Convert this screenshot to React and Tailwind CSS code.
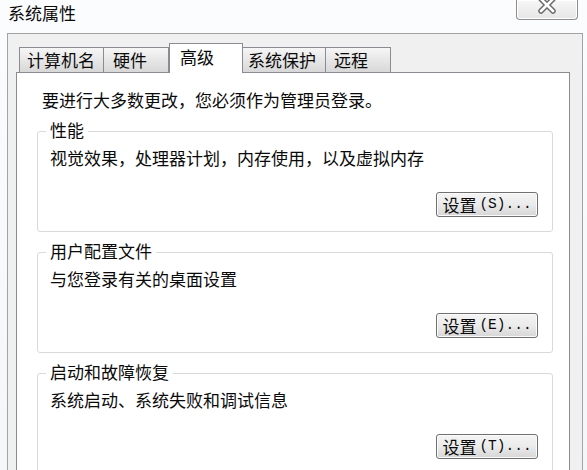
export default function App() {
  const groups = [
    { t: "性能", d: "视觉效果，处理器计划，内存使用，以及虚拟内存", k: "S" },
    { t: "用户配置文件", d: "与您登录有关的桌面设置", k: "E" },
    { t: "启动和故障恢复", d: "系统启动、系统失败和调试信息", k: "T" },
  ];
  return (
    <div className="w-[587px] h-[470px] overflow-hidden bg-linear-to-b from-[#fbfcfd] to-[#f4f6f8] text-[#0a0a0a] font-['Noto_Sans_CJK_SC','Noto_Sans',sans-serif] text-[17px] leading-[20px] flex flex-col">
      <div className="h-[33px] shrink-0 flex justify-between items-start">
        <div className="pl-[8px] pt-[3px]">系统属性</div>
        <div className="mr-[9px] w-[62px] h-[20px] border border-t-0 border-[#8e8e8e] rounded-b-[4px] bg-linear-to-b from-[#f7f7f7] to-[#e6e6e6] shadow-[inset_0_0_0_1px_#ffffff] flex justify-center overflow-hidden">
          <svg width="24" height="24" viewBox="0 0 24 24" className="-mt-[7px]">
            <path d="M6 6 L18 18 M18 6 L6 18" stroke="#6a6a6a" strokeWidth="5.5" strokeLinecap="round" fill="none" />
            <path d="M6 6 L18 18 M18 6 L6 18" stroke="#ffffff" strokeWidth="2.6" strokeLinecap="round" fill="none" />
          </svg>
        </div>
      </div>
      <div className="ml-[7px] w-[576px] flex-1 bg-[#f0f0f0] border border-b-0 border-[#a3a3a3] pl-[8px] pt-[9px] flex flex-col">
        <div className="h-[29px] pl-[3px] flex items-end shrink-0">
          <div className="w-[85px] h-[25px] border border-b-0 border-[#8a8c92] bg-linear-to-b from-[#f6f6f6] to-[#d8d8d8] pl-[7px] pt-[2px] whitespace-nowrap">计算机名</div>
          <div className="-ml-px w-[66px] h-[25px] border border-b-0 border-[#8a8c92] bg-linear-to-b from-[#f6f6f6] to-[#d8d8d8] pl-[9px] pt-[2px]">硬件</div>
          <div className="relative z-10 -mb-px w-[74px] h-[30px] border border-b-0 border-[#8a8c92] bg-white pl-[10px] pt-[3px]">高级</div>
          <div className="-ml-px w-[84px] h-[25px] border border-b-0 border-[#8a8c92] bg-linear-to-b from-[#f6f6f6] to-[#d8d8d8] pl-[5px] pt-[2px] whitespace-nowrap">系统保护</div>
          <div className="-ml-px w-[66px] h-[25px] border border-b-0 border-[#8a8c92] bg-linear-to-b from-[#f6f6f6] to-[#d8d8d8] pl-[8px] pt-[2px]">远程</div>
        </div>
        <div className="w-[554px] flex-1 bg-white border border-b-0 border-[#8a8c92] pt-[17px] flex flex-col">
          <div className="pl-[25px]">要进行大多数更改，您必须作为管理员登录。</div>
          <div className="flex flex-col mt-[10px] gap-[9px]">
            {groups.map((g) => (
              <fieldset key={g.k} className="ml-[20px] mr-[16px] border border-[#d6dadd] rounded-[3px] pl-[8px] pr-[14px] pb-[14px]">
                <legend className="px-[4px] pb-[3px] leading-[20px]">{g.t}</legend>
                <div className="ml-[4px] mt-[5px]">{g.d}</div>
                <div className="mt-[24px] flex justify-end">
                  <button className="w-[102px] h-[25px] rounded-[3px] border border-[#707070] bg-linear-to-b from-[#f4f4f4] via-[#ebebeb] to-[#d6d6d6] shadow-[inset_0_0_0_1px_#fbfbfb] flex items-center justify-center text-[17px] leading-none text-[#0a0a0a]">
                    <span>设置</span>
                    <span className="font-['Liberation_Mono',monospace] text-[14.5px] ml-[3px]">({g.k})...</span>
                  </button>
                </div>
              </fieldset>
            ))}
          </div>
        </div>
      </div>
    </div>
  );
}
